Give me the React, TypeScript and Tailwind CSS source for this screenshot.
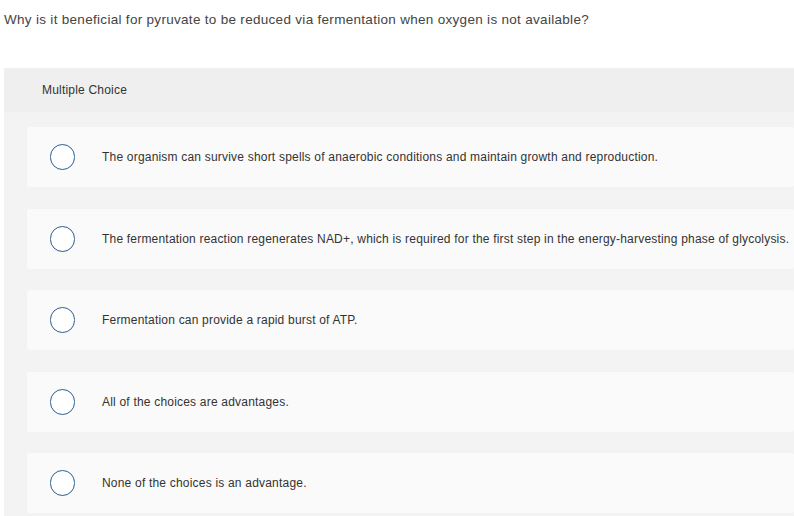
const choices = [
  "The organism can survive short spells of anaerobic conditions and maintain growth and reproduction.",
  "The fermentation reaction regenerates NAD+, which is required for the first step in the energy-harvesting phase of glycolysis.",
  "Fermentation can provide a rapid burst of ATP.",
  "All of the choices are advantages.",
  "None of the choices is an advantage.",
];

function Radio() {
  return (
    <span className="w-[25px] h-[26px] shrink-0 rounded-full border-[1.5px] border-[#2c5e91] bg-white" />
  );
}

export default function App() {
  return (
    <div className="w-[794px] h-[516px] bg-white overflow-hidden font-['Liberation_Sans',sans-serif] text-[#333]">
      <p className="pl-[4px] pt-[10px] h-[68px] text-[13.5px] tracking-[0.3px] text-[#444]">
        Why is it beneficial for pyruvate to be reduced via fermentation when oxygen is not available?
      </p>
      <div className="ml-[4px] bg-[#f3f3f3] pb-[4px]">
        <div className="h-[44px] bg-[#efefef] pl-[38px] flex items-center text-[12px] tracking-[0.2px] text-[#333]">
          Multiple Choice
        </div>
        <ul className="flex flex-col gap-[21.5px] pt-[15px] pl-[23px]">
          {choices.map((c) => (
            <li key={c} className="h-[60px] bg-[#fafafa] rounded-[2px] flex items-center pl-[23px]">
              <Radio />
              <span className="ml-[27px] text-[12px] tracking-[0.2px] whitespace-nowrap">{c}</span>
            </li>
          ))}
        </ul>
      </div>
    </div>
  );
}
